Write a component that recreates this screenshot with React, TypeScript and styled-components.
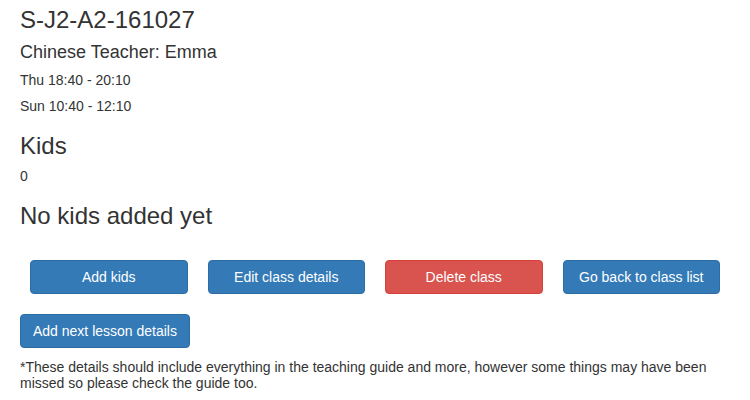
import React from "react";
import styled, { createGlobalStyle, css } from "styled-components";

const GlobalStyle = createGlobalStyle`
  html, body {
    margin: 0;
    padding: 0;
    background: #ffffff;
  }
  body {
    font-family: "Liberation Sans", Arial, Helvetica, sans-serif;
    font-size: 14px;
    line-height: 1.42857;
    color: #333333;
  }
  * { box-sizing: border-box; }
`;

const Page = styled.main`
  display: flex;
  flex-direction: column;
  width: 750px;
  padding: 7px 20px 0;
`;

const headingBase = css`
  margin: 0;
  font-weight: 500;
  line-height: 1.1;
  color: #333333;
`;

const PageTitle = styled.h3`
  ${headingBase};
  font-size: 24px;
`;

const Teacher = styled.h4`
  ${headingBase};
  font-size: 18px;
  margin-top: 10px;
`;

const Schedule = styled.h5`
  ${headingBase};
  font-size: 14px;
  margin-top: 10px;
`;

const SectionTitle = styled.h3<{ $gap: number }>`
  ${headingBase};
  font-size: 24px;
  margin-top: ${(p) => p.$gap}px;
`;

const Count = styled.div`
  font-size: 14px;
  line-height: 14px;
  margin-top: 10px;
`;

const ButtonGrid = styled.div`
  display: grid;
  grid-template-columns: repeat(4, 1fr);
  column-gap: 20px;
  padding: 0 10px;
  margin-top: 30px;
`;

const Button = styled.button<{ $variant?: "primary" | "danger" }>`
  display: inline-block;
  height: 34px;
  padding: 6px 12px;
  font-family: inherit;
  font-size: 14px;
  line-height: 20px;
  color: #ffffff;
  text-align: center;
  white-space: nowrap;
  border-radius: 4px;
  border: 1px solid
    ${(p) => (p.$variant === "danger" ? "#d43f3a" : "#2e6da4")};
  background: ${(p) => (p.$variant === "danger" ? "#d9534f" : "#337ab7")};
  cursor: pointer;
`;

const LessonButton = styled(Button)`
  align-self: flex-start;
  margin-top: 20px;
`;

const Note = styled.p`
  margin: 11px 0 0;
  font-size: 14px;
  line-height: 16px;
`;

export default function App() {
  return (
    <>
      <GlobalStyle />
      <Page>
        <PageTitle>S-J2-A2-161027</PageTitle>
        <Teacher>Chinese Teacher: Emma</Teacher>
        <Schedule>Thu 18:40 - 20:10</Schedule>
        <Schedule>Sun 10:40 - 12:10</Schedule>
        <SectionTitle $gap={19}>Kids</SectionTitle>
        <Count>0</Count>
        <SectionTitle $gap={20}>No kids added yet</SectionTitle>
        <ButtonGrid>
          <Button>Add kids</Button>
          <Button>Edit class details</Button>
          <Button $variant="danger">Delete class</Button>
          <Button>Go back to class list</Button>
        </ButtonGrid>
        <LessonButton>Add next lesson details</LessonButton>
        <Note>
          *These details should include everything in the teaching guide and
          more, however some things may have been missed so please check the
          guide too.
        </Note>
      </Page>
    </>
  );
}
